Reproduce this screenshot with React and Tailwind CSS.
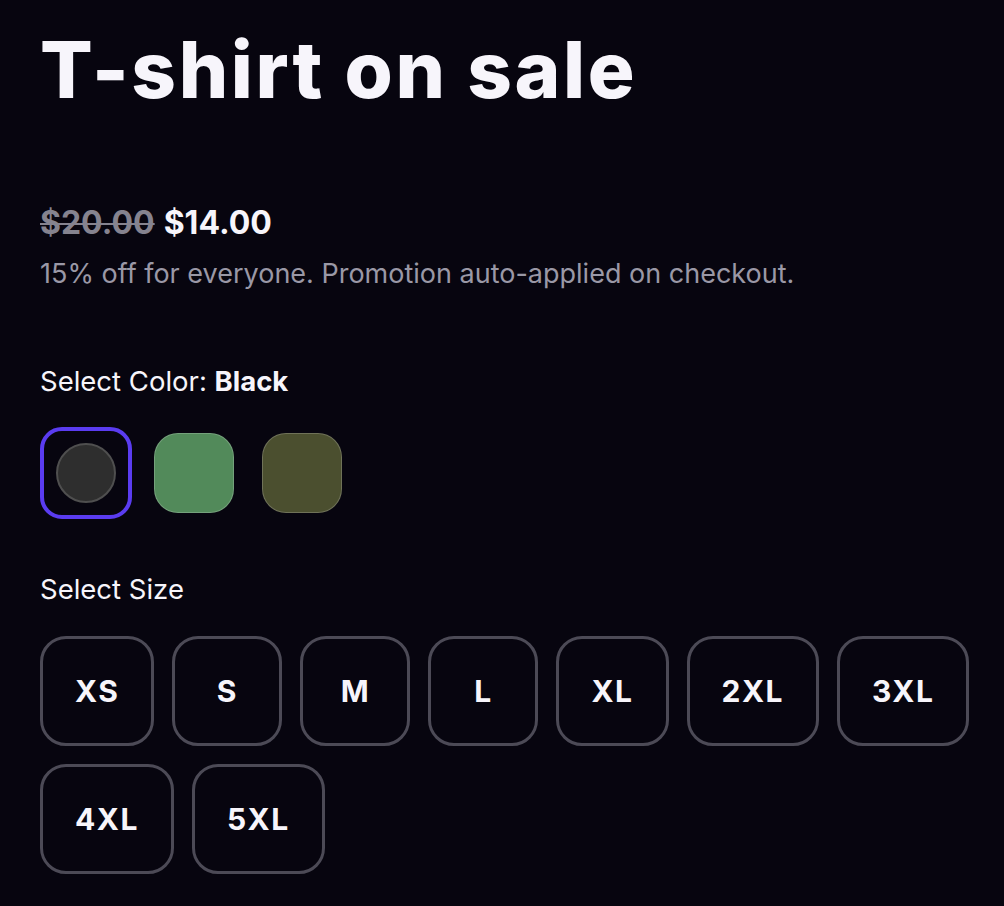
import React from 'react';

const colors = [
  { name: 'Black', value: '#2e2e2e' },
  { name: 'Green', value: '#528a5a' },
  { name: 'Olive', value: '#4b4f2f' },
];

const sizes = ['XS', 'S', 'M', 'L', 'XL', '2XL', '3XL', '4XL', '5XL'];

const App = () => {
  const selectedColor = 'Black';

  return (
    <div className="min-h-[906px] bg-[#07050f] pl-10 pr-6 pt-[31px] pb-10 font-['Inter','Liberation_Sans',sans-serif] text-[#f7f5fb]">
      <h1 className="text-[78px] font-extrabold leading-none tracking-[2.6px]">T-shirt on sale</h1>

      <div className="mt-[96px] flex items-baseline gap-[9px] text-[32px] font-bold leading-9">
        <span className="text-[#85838f] line-through decoration-2">$20.00</span>
        <span>$14.00</span>
      </div>
      <p className="mt-[17px] text-[27px] leading-8 text-[#9a98a6]">
        15% off for everyone. Promotion auto-applied on checkout.
      </p>

      <p className="mt-[75px] text-[27.5px] leading-8">
        Select Color: <span className="font-bold">{selectedColor}</span>
      </p>
      <div className="mt-[30px] flex gap-4">
        {colors.map((c) =>
          c.name === selectedColor ? (
            <button
              key={c.name}
              className="flex h-[92px] w-[92px] items-center justify-center rounded-[22px] border-4 border-[#5a3cf0]"
            >
              <span
                className="h-[60px] w-[60px] rounded-full border-2 border-[#4f4f4f]"
                style={{ backgroundColor: c.value }}
              />
            </button>
          ) : (
            <button key={c.name} className="flex h-[92px] w-[92px] items-center justify-center">
              <span
                className="h-20 w-20 rounded-[24px] border border-white/20"
                style={{ backgroundColor: c.value }}
              />
            </button>
          )
        )}
      </div>

      <p className="mt-[54px] text-[27.5px] leading-8">Select Size</p>
      <div className="mt-[31px] flex flex-wrap gap-[18px]">
        {sizes.map((s) => (
          <button
            key={s}
            className="flex h-[110px] min-w-[110px] items-center justify-center rounded-[26px] border-[3px] border-[#4c4a56] px-8 text-[30px] font-bold tracking-[1.5px]"
          >
            {s}
          </button>
        ))}
      </div>
    </div>
  );
};

export default App;
